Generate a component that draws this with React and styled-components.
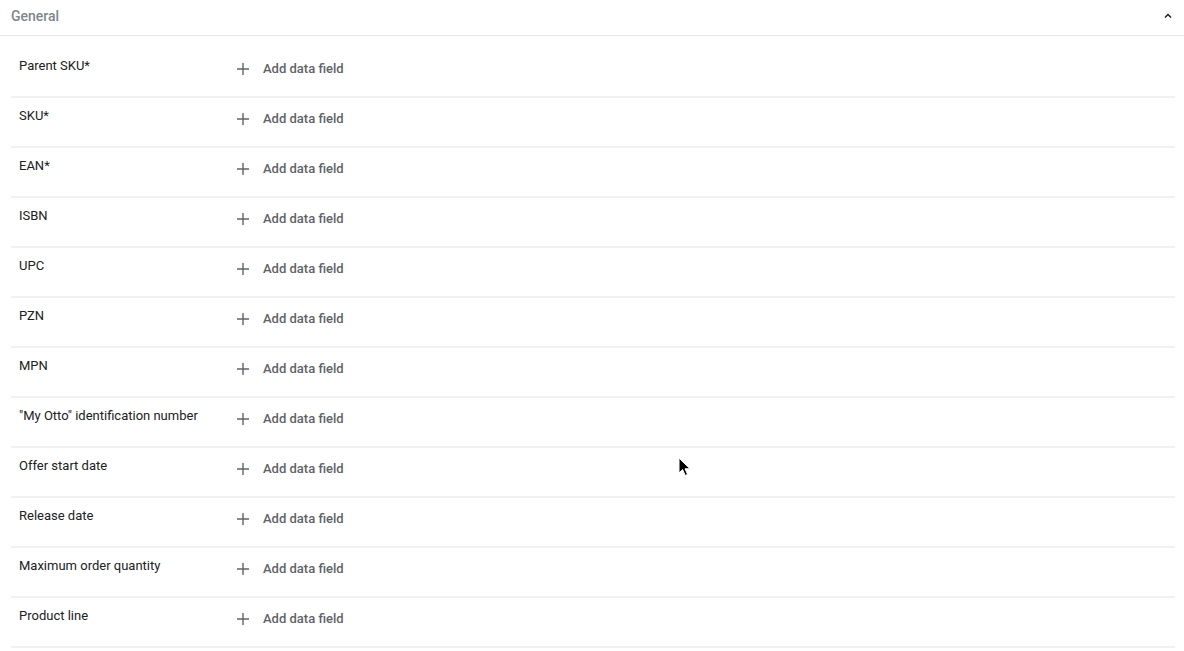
import React from 'react';
import styled, { createGlobalStyle } from 'styled-components';

const fields = [
  'Parent SKU*',
  'SKU*',
  'EAN*',
  'ISBN',
  'UPC',
  'PZN',
  'MPN',
  '"My Otto" identification number',
  'Offer start date',
  'Release date',
  'Maximum order quantity',
  'Product line',
];

const GlobalStyle = createGlobalStyle`
  html, body {
    margin: 0;
    padding: 0;
    background: #fff;
    font-family: Roboto, "Liberation Sans", Arial, sans-serif;
    overflow: hidden;
  }
`;

const PlusIcon = () => (
  <svg width="14" height="14" viewBox="0 0 14 14" fill="none">
    <path d="M7 1v12M1 7h12" stroke="#5f6368" strokeWidth="1.4" />
  </svg>
);

const ChevronUp = () => (
  <svg width="10" height="10" viewBox="0 0 10 10" fill="none">
    <path d="M2 6.5L5 3.5L8 6.5" stroke="#202124" strokeWidth="1.5" />
  </svg>
);

const Pointer = () => (
  <svg width="14" height="20" viewBox="0 0 14 20">
    <path
      d="M1 1v15l3.6-3.4 2.6 5.8 2.4-1-2.6-5.6H12z"
      fill="#000"
      stroke="#fff"
      strokeWidth="1"
    />
  </svg>
);

const App = () => (
  <Page>
    <GlobalStyle />
    <SectionHeader>
      <SectionTitle>General</SectionTitle>
      <ChevronUp />
    </SectionHeader>
    <FieldList>
      {fields.map(name => (
        <FieldRow key={name}>
          <FieldLabel>{name}</FieldLabel>
          <AddButton type="button">
            <PlusIcon />
            <span>Add data field</span>
          </AddButton>
        </FieldRow>
      ))}
    </FieldList>
    <Cursor>
      <Pointer />
    </Cursor>
  </Page>
);

const Page = styled.div`
  position: relative;
  width: 1184px;
  height: 651px;
  overflow: hidden;
`;

const SectionHeader = styled.div`
  height: 32px;
  display: flex;
  align-items: center;
  justify-content: space-between;
  padding: 0 11px 3px;
  border-bottom: 1px solid #e6e6e6;
  box-sizing: content-box;
`;

const SectionTitle = styled.span`
  font-size: 14px;
  font-weight: 500;
  color: #80868b;
`;

const FieldList = styled.div`
  padding: 12px 9px 0 11px;
`;

const FieldRow = styled.div`
  height: 48px;
  display: flex;
  align-items: flex-start;
  padding: 0 8px;
  border-bottom: 2px solid #f1f1f1;
  box-sizing: content-box;
`;

const FieldLabel = styled.div`
  width: 217px;
  padding-top: 8px;
  font-size: 13px;
  line-height: 20px;
  color: #202124;
`;

const AddButton = styled.button`
  display: flex;
  align-items: center;
  gap: 13px;
  margin-top: 13px;
  padding: 0;
  border: none;
  background: none;
  font-family: inherit;
  font-size: 13px;
  font-weight: 500;
  color: #5f6368;
  cursor: pointer;
`;

const Cursor = styled.div`
  position: absolute;
  left: 678px;
  top: 457px;
  pointer-events: none;
`;

export default App;
